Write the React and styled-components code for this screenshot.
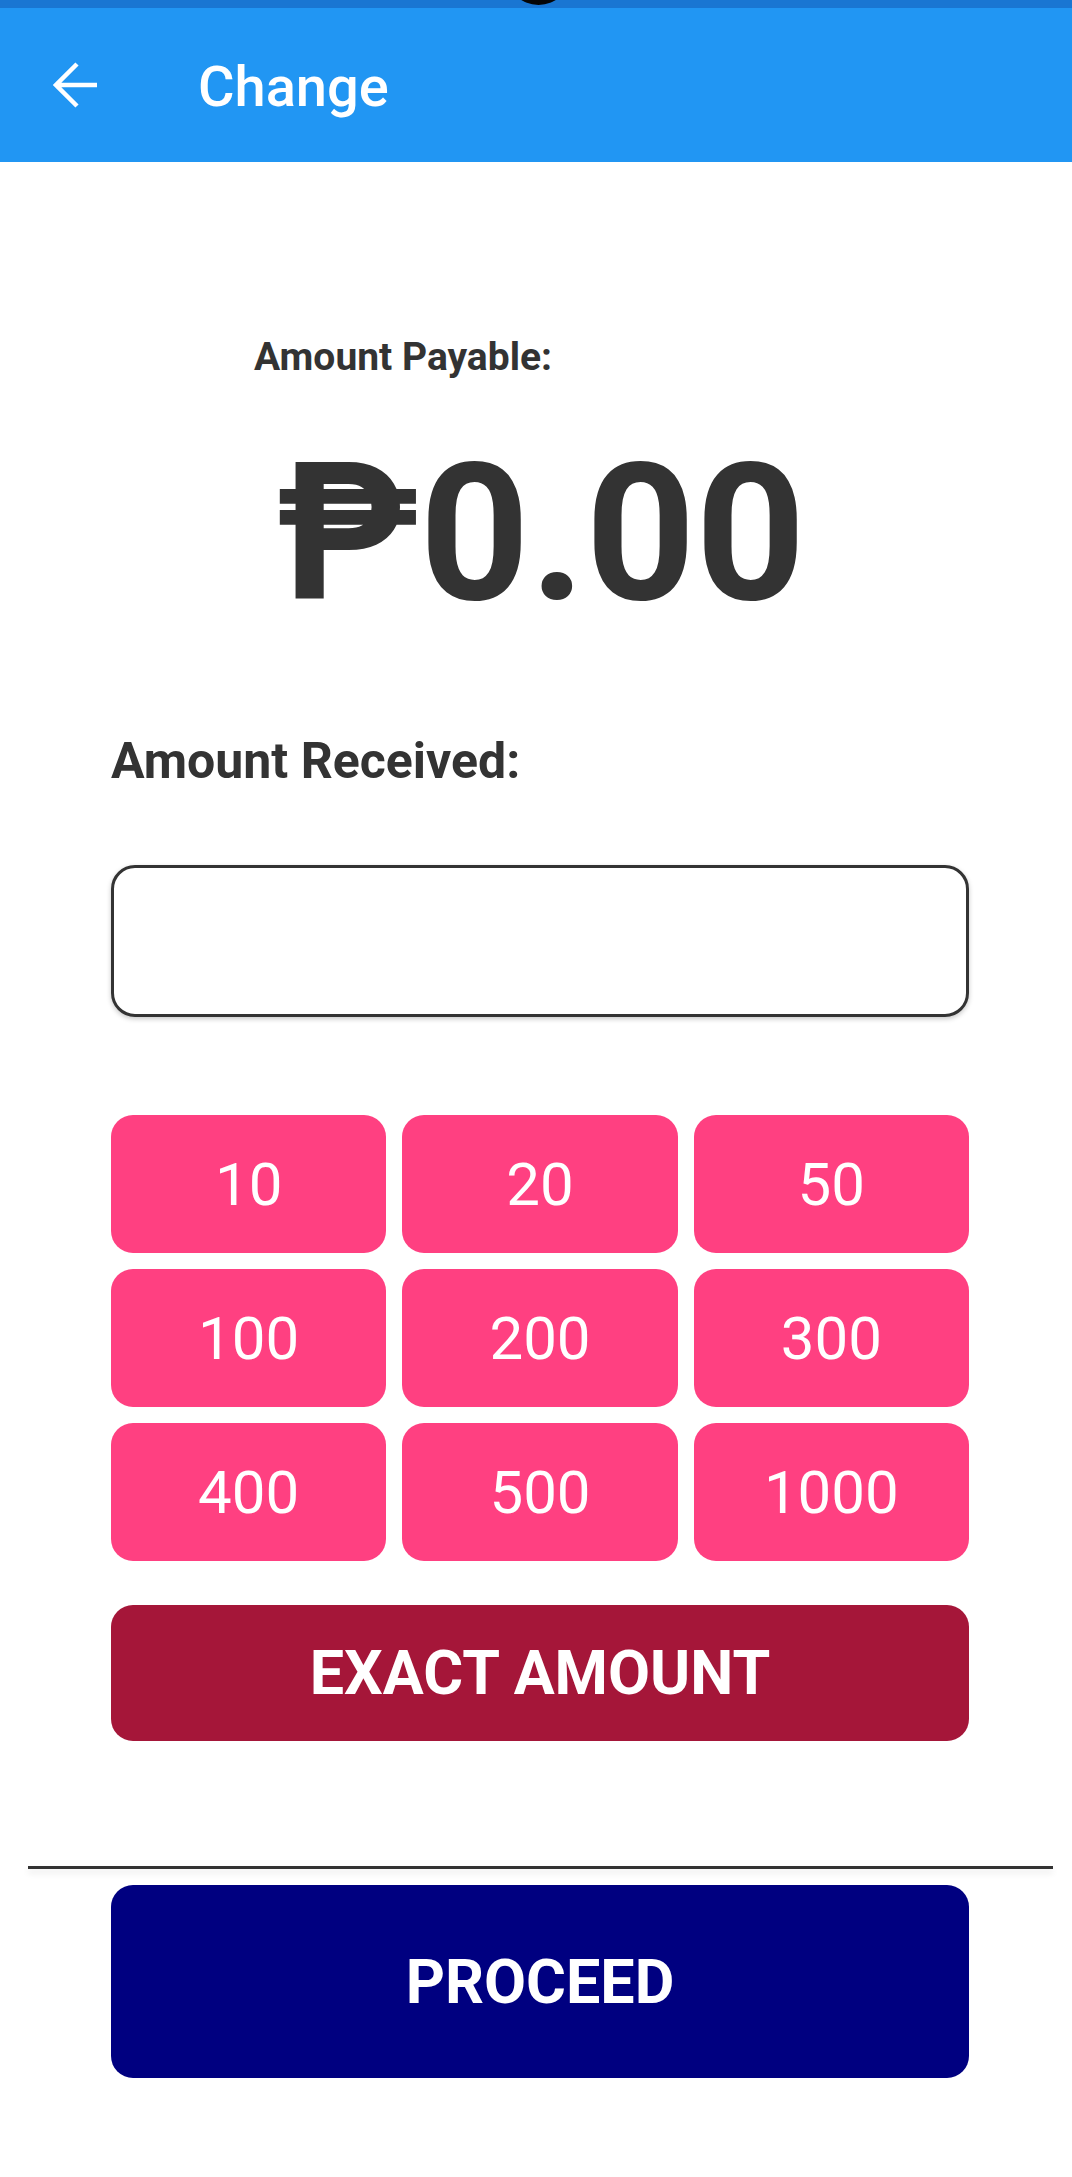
import React from "react";
import styled, { createGlobalStyle } from "styled-components";

const GlobalStyle = createGlobalStyle`
  html, body {
    margin: 0;
    padding: 0;
    background: #ffffff;
  }
  body {
    font-family: Roboto, "Noto Sans", "DejaVu Sans", sans-serif;
    color: #333333;
  }
  * { box-sizing: border-box; }
`;

const Screen = styled.div`
  width: 1072px;
  min-height: 2177px;
  background: #ffffff;
  display: flex;
  flex-direction: column;
`;

const StatusBar = styled.div`
  position: relative;
  height: 8px;
  background: #1976d2;
  overflow: hidden;
`;

const Camera = styled.div`
  position: absolute;
  left: 506px;
  top: -60px;
  width: 65px;
  height: 65px;
  border-radius: 50%;
  background: #050505;
`;

const AppBar = styled.header`
  height: 154px;
  background: #2196f3;
  display: flex;
  align-items: center;
  padding-left: 53px;
`;

const BackButton = styled.button`
  width: 46px;
  height: 46px;
  padding: 0;
  border: none;
  background: transparent;
  display: flex;
  align-items: center;
  justify-content: center;
  cursor: pointer;
`;

const Title = styled.h1`
  margin: 0 0 0 99px;
  padding-top: 4px;
  font-family: Roboto, sans-serif;
  font-size: 56px;
  font-weight: 500;
  color: #ffffff;
  line-height: 1;
`;

const Content = styled.main`
  display: flex;
  flex-direction: column;
  padding: 0 103px 0 111px;
`;

const PayableLabel = styled.div`
  margin: 172px 0 0 143px;
  font-size: 39px;
  font-weight: 700;
  line-height: 46px;
  color: #333333;
`;

const Amount = styled.div`
  margin-top: 38px;
  padding-left: 2px;
  text-align: center;
  font-size: 192px;
  font-weight: 700;
  line-height: 232px;
  color: #333333;
`;

const ReceivedLabel = styled.label`
  margin-top: 82px;
  font-size: 50px;
  font-weight: 700;
  line-height: 59px;
  color: #333333;
`;

const AmountInput = styled.input`
  margin-top: 74px;
  height: 152px;
  width: 100%;
  border: 3px solid #333333;
  border-radius: 24px;
  background: #ffffff;
  box-shadow: 0 2px 5px rgba(0, 0, 0, 0.22);
  font-family: Roboto, sans-serif;
  font-size: 50px;
  padding: 0 30px;
  outline: none;
`;

const CashGrid = styled.div`
  margin-top: 98px;
  display: grid;
  grid-template-columns: repeat(3, 1fr);
  grid-auto-rows: 138px;
  column-gap: 16px;
  row-gap: 16px;
`;

const CashButton = styled.button`
  border: none;
  border-radius: 22px;
  background: #ff4081;
  color: #ffffff;
  font-family: Roboto, sans-serif;
  font-size: 60px;
  font-weight: 400;
  display: flex;
  align-items: center;
  justify-content: center;
  padding: 0;
  cursor: pointer;
`;

const WideButton = styled.button`
  width: 100%;
  height: ${(p) => p.$height}px;
  margin-top: ${(p) => p.$top}px;
  border: none;
  border-radius: 22px;
  background: ${(p) => p.$bg};
  color: #ffffff;
  font-family: Roboto, sans-serif;
  font-size: 61px;
  font-weight: 700;
  text-transform: uppercase;
  display: flex;
  align-items: center;
  justify-content: center;
  padding: 0;
  cursor: pointer;
`;

const Footer = styled.footer`
  margin-top: 125px;
  display: flex;
  flex-direction: column;
`;

const Divider = styled.hr`
  margin: 0 19px 0 28px;
  height: 3px;
  border: none;
  background: #333333;
  box-shadow: 0 4px 6px rgba(0, 0, 0, 0.1);
`;

const FooterInner = styled.div`
  padding: 0 103px 0 111px;
`;

const BackArrow = () => (
  <svg width="46" height="46" viewBox="0 0 46 46" fill="none">
    <path
      d="M24 2 L3 23 L24 44 M3 23 H44"
      stroke="#ffffff"
      strokeWidth="4.5"
      strokeLinejoin="miter"
      strokeLinecap="butt"
    />
  </svg>
);

const denominations = [10, 20, 50, 100, 200, 300, 400, 500, 1000];

export default function App() {
  return (
    <>
      <GlobalStyle />
      <Screen>
        <StatusBar>
          <Camera />
        </StatusBar>
        <AppBar>
          <BackButton aria-label="Back">
            <BackArrow />
          </BackButton>
          <Title>Change</Title>
        </AppBar>
        <Content>
          <PayableLabel>Amount Payable:</PayableLabel>
          <Amount>₱0.00</Amount>
          <ReceivedLabel htmlFor="received">Amount Received:</ReceivedLabel>
          <AmountInput id="received" type="text" />
          <CashGrid>
            {denominations.map((d) => (
              <CashButton key={d}>{d}</CashButton>
            ))}
          </CashGrid>
          <WideButton $bg="#a51639" $height={136} $top={44}>
            Exact Amount
          </WideButton>
        </Content>
        <Footer>
          <Divider />
          <FooterInner>
            <WideButton $bg="#000080" $height={193} $top={16}>
              Proceed
            </WideButton>
          </FooterInner>
        </Footer>
      </Screen>
    </>
  );
}
